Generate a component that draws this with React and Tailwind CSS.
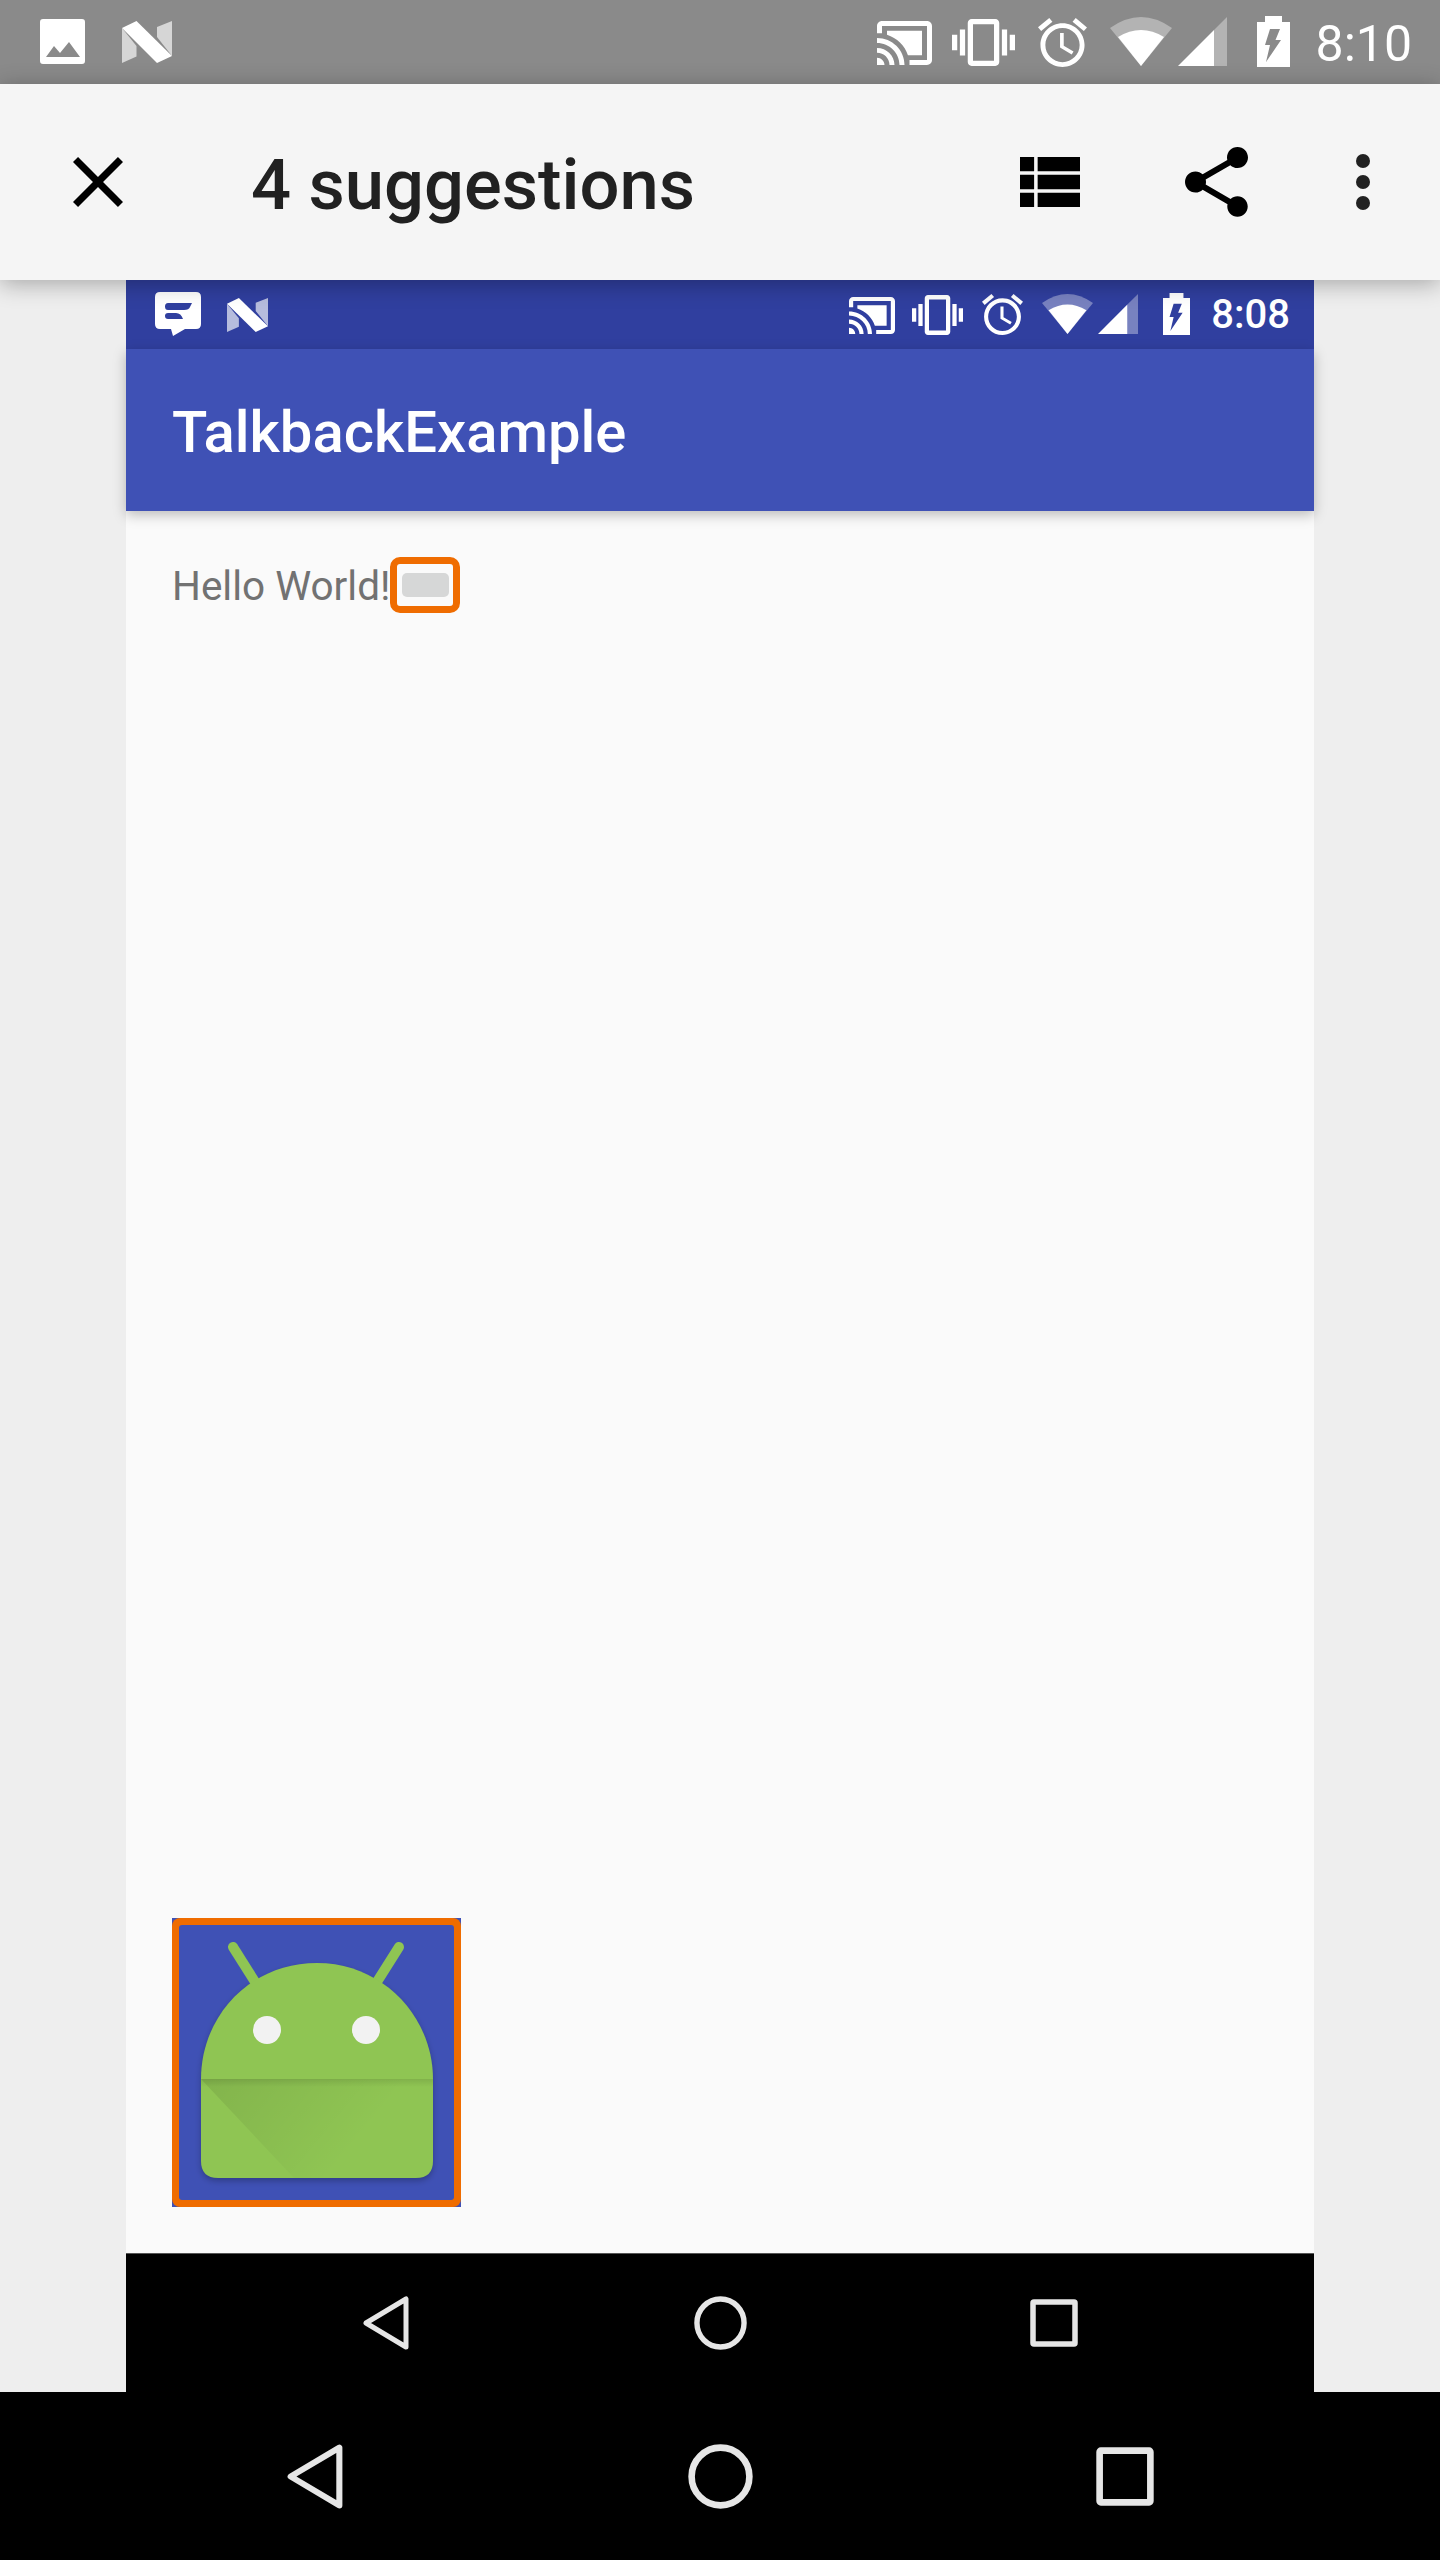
import React from "react"

const castPath = "M1 18v3h3c0-1.66-1.34-3-3-3zm0-4v2c2.76 0 5 2.24 5 5h2c0-3.87-3.13-7-7-7zm18-7H5v1.63c3.96 1.28 7.09 4.41 8.37 8.37H19V7zM1 10v2c4.97 0 9 4.03 9 9h2c0-6.08-4.93-11-11-11zm20-7H3c-1.1 0-2 .9-2 2v3h2V5h18v14h-7v2h7c1.1 0 2-.9 2-2V5c0-1.1-.9-2-2-2z"
const vibratePath = "M0 15h2V9H0v6zm3 2h2V7H3v10zm19-8v6h2V9h-2zm-3 8h2V7h-2v10zM16.5 3h-9C6.67 3 6 3.67 6 4.5v15c0 .83.67 1.5 1.5 1.5h9c.83 0 1.5-.67 1.5-1.5v-15c0-.83-.67-1.5-1.5-1.5zM16 19H8V5h8v14z"
const alarmPath = "M22 5.72l-4.6-3.86-1.29 1.53 4.6 3.86L22 5.72zM7.88 3.39L6.6 1.86 2 5.71l1.29 1.53 4.59-3.85zM12.5 8H11v6l4.75 2.85.75-1.23-4-2.37V8zM12 4c-4.97 0-9 4.03-9 9s4.03 9 9 9c4.97 0 9-4.03 9-9s-4.03-9-9-9zm0 16c-3.87 0-7-3.13-7-7s3.13-7 7-7 7 3.13 7 7-3.13 7-7 7z"
const sharePath = "M18 16.08c-.76 0-1.44.3-1.96.77L8.91 12.7c.05-.23.09-.46.09-.7s-.04-.47-.09-.7l7.05-4.11c.54.5 1.25.81 2.04.81 1.66 0 3-1.34 3-3s-1.34-3-3-3-3 1.34-3 3c0 .24.04.47.09.7L8.04 9.81C7.5 9.31 6.79 9 6 9c-1.66 0-3 1.34-3 3s1.34 3 3 3c.79 0 1.5-.31 2.04-.81l7.12 4.16c-.05.21-.08.43-.08.65 0 1.61 1.31 2.92 2.92 2.92 1.61 0 2.92-1.31 2.92-2.92s-1.31-2.92-2.92-2.92z"

function Glyph({ d, box, className }) {
  return (
    <svg viewBox={box} preserveAspectRatio="none" className={className} fill="currentColor">
      <path d={d} />
    </svg>
  )
}

function PictureIcon({ className }) {
  return (
    <svg viewBox="0 0 45 45" className={className} fill="white">
      <path
        fillRule="evenodd"
        d="M3 0H42Q45 0 45 3V42Q45 45 42 45H3Q0 45 0 42V3Q0 0 3 0ZM6 38L14 27L20 34L29 23L40 38Z"
      />
    </svg>
  )
}

function MessageIcon({ className }) {
  return (
    <svg viewBox="0 0 46 44" className={className} fill="white">
      <path
        fillRule="evenodd"
        d="M5 0H41Q46 0 46 5V32Q46 37 41 37H30L18 44L16 37H5Q0 37 0 32V5Q0 0 5 0ZM13 11H37L35 15Q34 18 29 18H13Q10 18 10 14.5Q10 11 13 11ZM13 21H21Q26 21 28 27H13Q10 27 10 24Q10 21 13 21Z"
      />
    </svg>
  )
}

function NLogo({ className }) {
  return (
    <svg viewBox="0 0 50 42" preserveAspectRatio="none" className={className} fill="white">
      <polygon points="0,7 14.5,25 14.5,35.5 0,42" fillOpacity="0.65" />
      <polygon points="35,6 50,0 50,35 35,16" fillOpacity="0.65" />
      <polygon points="0,7 14.5,0 50,35 35,42" />
    </svg>
  )
}

function WifiIcon({ className }) {
  return (
    <svg viewBox="0 0 62 49" preserveAspectRatio="none" className={className} fill="white">
      <path d="M0 11Q31 -11 62 11L31 49Z" fillOpacity="0.35" />
      <path d="M8 20Q31 6 54 20L31 49Z" />
    </svg>
  )
}

function SignalIcon({ className }) {
  return (
    <svg viewBox="0 0 49 49" preserveAspectRatio="none" className={className} fill="white">
      <polygon points="36,13 49,0 49,49 36,49" fillOpacity="0.35" />
      <polygon points="0,49 36,13 36,49" />
    </svg>
  )
}

function BatteryIcon({ className }) {
  return (
    <svg viewBox="0 0 33 51" preserveAspectRatio="none" className={className} fill="white">
      <path
        fillRule="evenodd"
        d="M8 0H25V6H33V51H0V6H8ZM13 13L8 29H13L9 46L24 24H18.5L23 13Z"
      />
    </svg>
  )
}

function BackIcon({ className }) {
  return (
    <svg viewBox="0 0 46 54" preserveAspectRatio="none" className={className} fill="none" stroke="#e6e6e6" strokeWidth="5" strokeLinejoin="round">
      <path d="M43 3V51L3 27Z" />
    </svg>
  )
}

function HomeIcon({ className }) {
  return (
    <svg viewBox="0 0 54 54" preserveAspectRatio="none" className={className} fill="none" stroke="#e6e6e6" strokeWidth="5.5">
      <circle cx="27" cy="27" r="24" />
    </svg>
  )
}

function RecentsIcon({ className }) {
  return (
    <svg viewBox="0 0 48 48" preserveAspectRatio="none" className={className} fill="none" stroke="#e6e6e6" strokeWidth="5.5">
      <rect x="3" y="3" width="42" height="42" rx="1" />
    </svg>
  )
}

function AndroidLogo() {
  return (
    <svg viewBox="0 0 275 275" className="w-[275px] h-[275px]">
      <defs>
        <linearGradient id="fold" x1="0" y1="0" x2="1" y2="0.35">
          <stop offset="0" stopColor="#000" stopOpacity="0.09" />
          <stop offset="0.8" stopColor="#000" stopOpacity="0" />
        </linearGradient>
        <linearGradient id="crease" x1="0" y1="0" x2="0" y2="1">
          <stop offset="0" stopColor="#000" stopOpacity="0.1" />
          <stop offset="1" stopColor="#000" stopOpacity="0" />
        </linearGradient>
        <filter id="soft" x="-10%" y="-10%" width="120%" height="120%">
          <feGaussianBlur stdDeviation="3" />
        </filter>
      </defs>
      <path
        d="M22 154C22 92 70 38 138 38C204 38 254 92 254 154V236Q254 253 237 253H39Q22 253 22 236Z"
        fill="#000"
        fillOpacity="0.25"
        filter="url(#soft)"
        transform="translate(0 3)"
      />
      <g stroke="#8fc553" strokeWidth="10" strokeLinecap="round">
        <line x1="54" y1="22" x2="78" y2="60" />
        <line x1="220" y1="22" x2="196" y2="60" />
      </g>
      <path
        d="M22 154C22 92 70 38 138 38C204 38 254 92 254 154V236Q254 253 237 253H39Q22 253 22 236Z"
        fill="#8fc553"
      />
      <path d="M22 154H254V253H115Z" fill="url(#fold)" />
      <rect x="22" y="154" width="232" height="8" fill="url(#crease)" />
      <circle cx="88" cy="105" r="14" fill="#f2f2f2" />
      <circle cx="187" cy="105" r="14" fill="#f2f2f2" />
    </svg>
  )
}

export default function App() {
  return (
    <div className="w-[1440px] h-[2560px] flex flex-col bg-[#eeeeee] font-['Roboto',sans-serif] overflow-hidden">
      <div className="h-[84px] flex items-start bg-[#8a8a8a] text-white shrink-0">
        <PictureIcon className="w-[45px] h-[45px] mt-[19px] ml-[40px]" />
        <NLogo className="w-[50px] h-[42px] mt-[21px] ml-[37px]" />
        <Glyph d={castPath} box="1 3 22 18" className="w-[55px] h-[44px] mt-[21px] ml-auto" />
        <Glyph d={vibratePath} box="0 3 24 18" className="w-[63px] h-[47px] mt-[19px] ml-[20px]" />
        <Glyph d={alarmPath} box="2 1.86 20 20.14" className="w-[49px] h-[49px] mt-[18px] ml-[23px]" />
        <WifiIcon className="w-[62px] h-[49px] mt-[17px] ml-[23px]" />
        <SignalIcon className="w-[49px] h-[49px] mt-[17px] ml-[6px]" />
        <BatteryIcon className="w-[33px] h-[51px] mt-[16px] ml-[30px]" />
        <span className="ml-[26px] mr-[28px] mt-[15px] text-[50px] leading-[58px]">8:10</span>
      </div>

      <div className="relative z-20 h-[196px] flex items-center bg-[#f5f5f5] shrink-0 shadow-[0_4px_22px_rgba(0,0,0,0.3)]">
        <Glyph d="M19 6.41L17.59 5 12 10.59 6.41 5 5 6.41 10.59 12 5 17.59 6.41 19 12 13.41 17.59 19 19 17.59 13.41 12 19 6.41z" box="5 5 14 14" className="w-[50px] h-[50px] ml-[73px] text-black" />
        <h1 className="ml-[128px] mt-[6px] text-[70.5px] leading-[80px] font-medium text-[#212121]">4 suggestions</h1>
        <Glyph d="M4 14h4v-4H4v4zm0 5h4v-4H4v4zM4 9h4V5H4v4zm5 5h12v-4H9v4zm0 5h12v-4H9v4zM9 5v4h12V5H9z" box="4 5 17 14" className="w-[60px] h-[50px] ml-auto text-black" />
        <Glyph d={sharePath} box="3 2 18 20" className="w-[63px] h-[70px] ml-[105px] text-black" />
        <svg viewBox="0 0 14 56" className="w-[14px] h-[56px] ml-[108px] mr-[70px]" fill="#212121">
          <circle cx="7" cy="7" r="7" />
          <circle cx="7" cy="28" r="7" />
          <circle cx="7" cy="49" r="7" />
        </svg>
      </div>

      <div className="mx-[126px] flex-1 flex flex-col bg-[#fafafa]">
        <div className="h-[69px] flex items-start bg-[#303f9f] text-white shrink-0">
          <MessageIcon className="w-[46px] h-[44px] mt-[12px] ml-[29px]" />
          <NLogo className="w-[41px] h-[34px] mt-[18px] ml-[26px]" />
          <Glyph d={castPath} box="1 3 22 18" className="w-[46px] h-[37px] mt-[17px] ml-auto" />
          <Glyph d={vibratePath} box="0 3 24 18" className="w-[51px] h-[40px] mt-[15px] ml-[17px]" />
          <Glyph d={alarmPath} box="2 1.86 20 20.14" className="w-[41px] h-[41px] mt-[14px] ml-[19px]" />
          <WifiIcon className="w-[51px] h-[40px] mt-[14px] ml-[19px]" />
          <SignalIcon className="w-[40px] h-[40px] mt-[14px] ml-[5px]" />
          <BatteryIcon className="w-[27px] h-[42px] mt-[13px] ml-[25px]" />
          <span className="ml-[21px] mr-[24px] mt-[11px] text-[40px] leading-[47px] font-medium">8:08</span>
        </div>

        <div className="relative z-10 h-[162px] flex items-center pl-[46px] bg-[#3f51b5] shrink-0 shadow-[0_4px_12px_rgba(0,0,0,0.25)]">
          <span className="mt-[3px] text-[58px] leading-[66px] font-medium text-white">TalkbackExample</span>
        </div>

        <div className="flex-1 flex flex-col justify-between px-[46px] pt-[46px] pb-[46px]">
          <div className="flex items-center h-[56px]">
            <span className="mt-[2px] text-[40.5px] leading-[47px] text-[#727272]">Hello World!</span>
            <div className="w-[70px] h-[56px] flex items-center justify-center rounded-[10px] border-[7px] border-[#ef6c00]">
              <div className="w-[47px] h-[24px] rounded-[5px] bg-[#d6d7d7]" />
            </div>
          </div>

          <div className="w-[289px] h-[289px] bg-[#3f51b5]">
            <div className="w-[289px] h-[289px] p-[7px] rounded-[8px] bg-[#ef6c00]">
              <div className="w-[275px] h-[275px] rounded-[3px] bg-[#3f51b5]">
                <AndroidLogo />
              </div>
            </div>
          </div>
        </div>

        <div className="h-[139px] flex items-start bg-black border-t border-[#555555] shrink-0">
          <BackIcon className="w-[46px] h-[54px] mt-[42px] ml-[237px]" />
          <HomeIcon className="w-[53px] h-[54px] mt-[42px] ml-[285px]" />
          <RecentsIcon className="w-[48px] h-[48px] mt-[45px] ml-[283px]" />
        </div>
      </div>

      <div className="h-[168px] flex items-start bg-black shrink-0">
        <BackIcon className="w-[56px] h-[65px] mt-[52px] ml-[287px]" />
        <HomeIcon className="w-[65px] h-[65px] mt-[52px] ml-[345px]" />
        <RecentsIcon className="w-[58px] h-[59px] mt-[55px] ml-[343px]" />
      </div>
    </div>
  )
}
